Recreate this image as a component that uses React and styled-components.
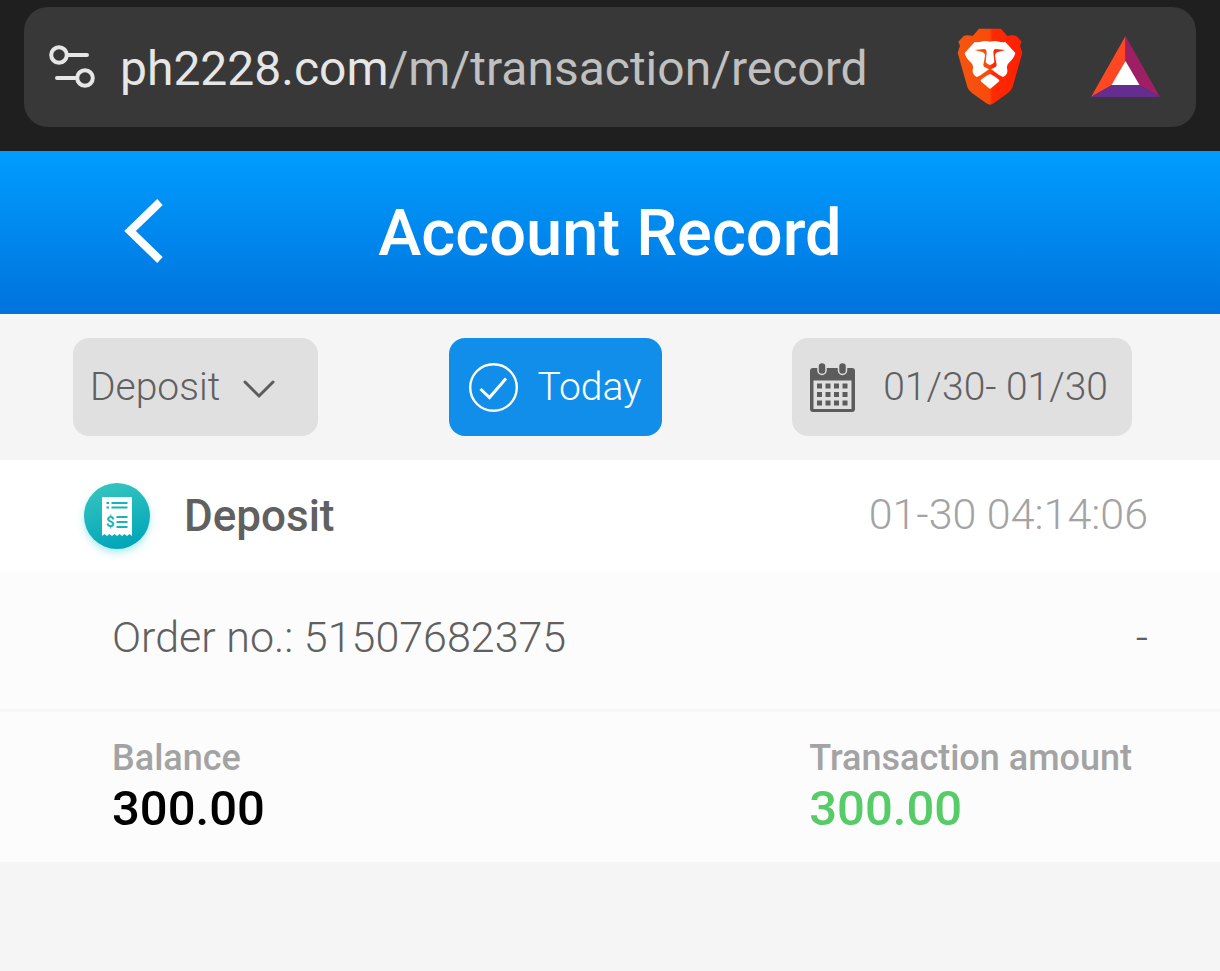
import React from 'react';
import styled, { createGlobalStyle } from 'styled-components';

const GlobalStyle = createGlobalStyle`
  * {
    box-sizing: border-box;
  }
  body {
    margin: 0;
    background-color: #f5f5f5;
    color: #606060;
    font-family: Roboto, 'Liberation Sans', sans-serif;
  }
  button,
  select {
    font: inherit;
    color: inherit;
    border: 0;
    margin: 0;
    padding: 0;
    background: none;
    cursor: pointer;
  }
  svg {
    display: block;
    flex-shrink: 0;
  }
`;

const BrowserBar = styled.div`
  padding: 7px 24px 24px;
  background-color: #1f1f1f;
`;

const AddressBox = styled.div`
  display: flex;
  align-items: center;
  min-height: 120px;
  padding: 0 36px 0 24px;
  border-radius: 24px;
  background-color: #383838;
`;

const Url = styled.div`
  flex: 1;
  margin-left: 24px;
  padding-top: 4px;
  font-size: 48px;
  line-height: 56px;
  color: #c0c0c0;
  white-space: nowrap;
  strong {
    font-weight: 400;
    color: #e6e6e6;
  }
`;

const Extensions = styled.div`
  display: flex;
  align-items: center;
  gap: 68px;
`;

const Header = styled.header`
  display: grid;
  grid-template-columns: 1fr auto 1fr;
  align-items: center;
  min-height: 163px;
  padding: 0 124px;
  background: linear-gradient(#009dff, #0073dd);
  color: #fff;
`;

const BackButton = styled.button`
  justify-self: start;
  padding-bottom: 4px;
`;

const Title = styled.h1`
  margin: 0;
  font-size: 65px;
  line-height: 80px;
  font-weight: 500;
`;

const Filters = styled.div`
  display: flex;
  justify-content: space-between;
  padding: 24px 88px 24px 73px;
  font-size: 39px;
  line-height: 48px;
  font-weight: 300;
`;

const FilterButton = styled.button`
  display: flex;
  align-items: center;
  gap: ${props => (props.$active ? '20px' : '28px')};
  height: 98px;
  padding: 0 ${props => (props.$active ? '20px' : '24px')} 0
    ${props => (props.$active ? '20px' : '18px')};
  border-radius: 16px;
  background-color: ${props => (props.$active ? '#118eea' : '#e0e0e0')};
  color: ${props => (props.$active ? '#fff' : '#606060')};
`;

const SelectBox = styled.label`
  display: grid;
  align-items: center;
  border-radius: 16px;
  background-color: #e0e0e0;
  select,
  svg {
    grid-area: 1 / 1;
  }
  select {
    appearance: none;
    width: 245px;
    height: 98px;
    padding: 0 80px 0 17px;
    border-radius: 16px;
  }
  svg {
    justify-self: end;
    margin: 4px 43px 0 0;
    pointer-events: none;
  }
`;

const Record = styled.article`
  background-color: #fcfcfc;
`;

const RecordHead = styled.div`
  display: flex;
  align-items: center;
  min-height: 112px;
  padding: 0 72px;
  background-color: #fff;
`;

const RecordTitle = styled.h2`
  flex: 1;
  margin: 0 0 0 22px;
  font-size: 44px;
  line-height: 48px;
  font-weight: 500;
`;

const Time = styled.time`
  padding-bottom: 4px;
  font-size: 43px;
  line-height: 48px;
  font-weight: 300;
  color: #a3a3a3;
`;

const Order = styled.div`
  display: flex;
  justify-content: space-between;
  align-items: center;
  min-height: 140px;
  padding: 0 72px 8px 112px;
  border-bottom: 3px solid #f7f7f7;
  font-size: 43px;
  line-height: 48px;
  font-weight: 300;
`;

const Amounts = styled.dl`
  display: flex;
  justify-content: space-between;
  margin: 0;
  padding: 22px 88px 26px 112px;
`;

const Label = styled.dt`
  font-size: 36px;
  line-height: 48px;
  font-weight: 500;
  color: #a3a3a3;
`;

const Amount = styled.dd`
  margin: 0;
  font-size: 49px;
  line-height: 54px;
  font-weight: 500;
  color: ${props => (props.$positive ? '#56cb68' : '#000')};
`;

const SiteIcon = () => (
  <svg width="48" height="44" viewBox="0 0 48 44" fill="none" stroke="#e6e6e6" strokeWidth="4" strokeLinecap="round">
    <circle cx="11" cy="10" r="7.8" />
    <path d="M20 10h19M9 33h18" />
    <circle cx="37" cy="33" r="7.8" />
  </svg>
);

const LionIcon = () => (
  <svg width="66" height="78" viewBox="53 55 198 234">
    <defs>
      <linearGradient id="lion" x1="0" x2="1">
        <stop offset="0" stopColor="#f4560e" />
        <stop offset="0.49" stopColor="#fa4a0b" />
        <stop offset="0.54" stopColor="#ff2a00" />
        <stop offset="1" stopColor="#ff2000" />
      </linearGradient>
    </defs>
    <path
      fill="url(#lion)"
      d="M119 57H185L204 79Q221 75 231 79L247 96L242 108L249 129L220 232Q216 243 207 249L163 281Q152 289 141 281L97 249Q88 243 84 232L55 129L62 108L57 96L73 79Q83 75 100 79Z"
    />
    <path
      fill="#fff"
      d="M106 97Q118 99 130 95Q141 92 152 96Q163 92 174 95Q186 99 198 97L228 130Q224 146 209 159Q200 168 204 180Q206 194 191 202Q180 198 171 190L155 179L170 171Q174 168 171 160L167 139Q166 132 173 128L198 121L169 118Q162 119 162 128L165 157Q160 164 152 166Q144 164 139 157L142 128Q142 119 135 118L106 121L131 128Q138 132 137 139L133 160Q130 168 134 171L149 179L133 190Q124 198 113 202Q98 194 100 180Q104 168 95 159Q80 146 76 130Z"
    />
    <path fill="#fff" d="M152 193Q158 195 165 200L179 210Q182 213 178 216L155 236Q152 238 149 236L126 216Q122 213 125 210L139 200Q146 195 152 193Z" />
  </svg>
);

const TriangleIcon = () => (
  <svg width="69" height="62" viewBox="0 0 69 62">
    <path fill="#ff4724" d="M34.5 0V25L21 49L0 61Z" />
    <path fill="#9e1f63" d="M34.5 0L69 61L48 49L34.5 25Z" />
    <path fill="#662d91" d="M0 61L21 49H48L69 61Z" />
    <path fill="#fff" d="M34.5 25L48.500 49H20.500Z" />
  </svg>
);

const BackIcon = () => (
  <svg width="40" height="66" viewBox="0 0 40 66" fill="none" stroke="currentColor" strokeWidth="8">
    <path d="M36 4L6 33L36 62" />
  </svg>
);

const ChevronIcon = () => (
  <svg width="32" height="20" viewBox="0 0 32 20" fill="none" stroke="#5c5c5c" strokeWidth="3" strokeLinecap="round">
    <path d="M2 3L16 17L30 3" />
  </svg>
);

const CheckIcon = () => (
  <svg width="49" height="49" viewBox="0 0 49 49" fill="none" stroke="currentColor">
    <circle cx="24.500" cy="24.500" r="23.300" strokeWidth="2.400" />
    <path strokeWidth="3" d="M11.500 26L20.500 34.500L37 15.500" />
  </svg>
);

const CalendarIcon = () => (
  <svg width="45" height="49" viewBox="0 0 45 49">
    <path
      fill="#5c5c5c"
      fillRule="evenodd"
      d="M3 5H42Q45 5 45 8V46Q45 49 42 49H3Q0 49 0 46V8Q0 5 3 5ZM3.500 17.500V46H41.500V17.500Z"
    />
    {[12, 32.500].map(x => (
      <rect key={x} x={x - 4} y="-0.500" width="8" height="12" rx="4" fill="#5c5c5c" stroke="#e0e0e0" strokeWidth="1.500" />
    ))}
    {[20.500, 29, 37.500].map(y =>
      [7, 15.500, 24, 32.500].map(x => (
        <rect key={`${x}-${y}`} x={x} y={y} width="5" height="5" fill="#5c5c5c" />
      ))
    )}
  </svg>
);

const DepositIcon = () => (
  <svg width="90" height="90" viewBox="0 0 90 90">
    <defs>
      <linearGradient id="coin" x1="0.300" y1="0" x2="0.600" y2="1">
        <stop offset="0" stopColor="#35c5bf" />
        <stop offset="1" stopColor="#00a5b9" />
      </linearGradient>
      <filter id="glow" x="-30%" y="-30%" width="160%" height="160%">
        <feGaussianBlur stdDeviation="4" />
      </filter>
    </defs>
    <circle cx="45" cy="49" r="32" fill="#9fe6ec" filter="url(#glow)" />
    <circle cx="45" cy="45" r="33" fill="url(#coin)" />
    <path
      fill="#fff"
      d="M30 26H60V65L57.500 63L55 65L52.500 63L50 65L47.500 63L45 65L42.500 63L40 65L37.500 63L35 65L32.500 63L30 65Z"
    />
    <path stroke="#16b3bb" strokeWidth="2.200" d="M34.500 32H37M39.500 32H55.500M34.500 36.500H37M39.500 36.500H55.500M44.500 46H55.500M44.500 51H55.500M44.500 56H55.500" />
    <text x="34" y="56" fontSize="15" fontWeight="700" fill="#16b3bb">
      $
    </text>
  </svg>
);

const App = () => (
  <>
    <GlobalStyle />
    <BrowserBar>
      <AddressBox>
        <button aria-label="Site settings">
          <SiteIcon />
        </button>
        <Url>
          <strong>ph2228.com</strong>/m/transaction/record
        </Url>
        <Extensions>
          <button aria-label="Shields">
            <LionIcon />
          </button>
          <button aria-label="Rewards">
            <TriangleIcon />
          </button>
        </Extensions>
      </AddressBox>
    </BrowserBar>

    <Header>
      <BackButton aria-label="Back">
        <BackIcon />
      </BackButton>
      <Title>Account Record</Title>
    </Header>

    <main>
      <Filters>
        <SelectBox>
          <select aria-label="Record type" defaultValue="Deposit">
            <option>Deposit</option>
          </select>
          <ChevronIcon />
        </SelectBox>
        <FilterButton $active>
          <CheckIcon />
          <span>Today</span>
        </FilterButton>
        <FilterButton>
          <CalendarIcon />
          <span>01/30- 01/30</span>
        </FilterButton>
      </Filters>

      <Record>
        <RecordHead>
          <DepositIcon />
          <RecordTitle>Deposit</RecordTitle>
          <Time>01-30 04:14:06</Time>
        </RecordHead>
        <Order>
          <span>Order no.: 51507682375</span>
          <span>-</span>
        </Order>
        <Amounts>
          <div>
            <Label>Balance</Label>
            <Amount>300.00</Amount>
          </div>
          <div>
            <Label>Transaction amount</Label>
            <Amount $positive>300.00</Amount>
          </div>
        </Amounts>
      </Record>
    </main>
  </>
);

export default App;
